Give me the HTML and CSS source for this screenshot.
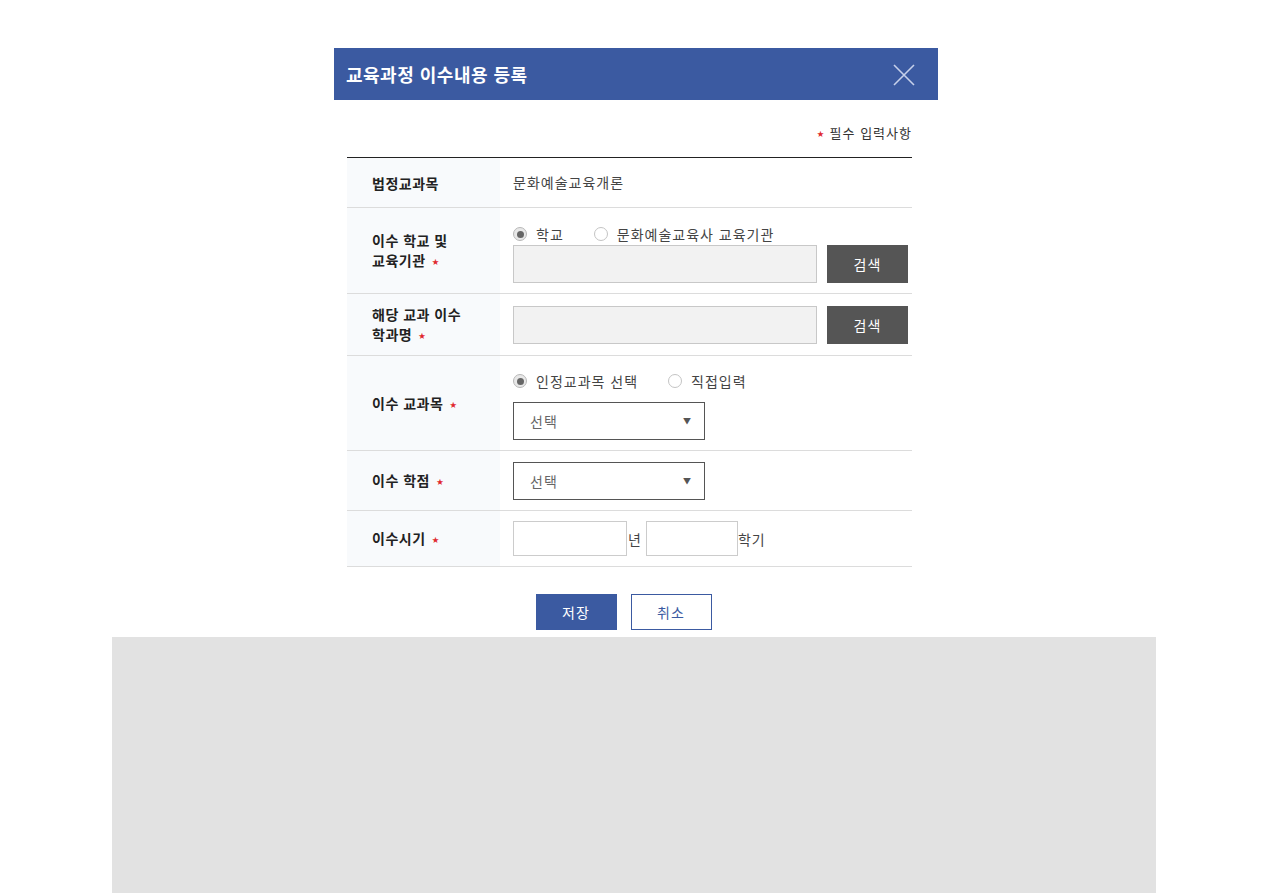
FILE: index.html
```html
<!DOCTYPE html>
<html lang="ko">
<head>
    <meta charset="UTF-8">
    <meta name="viewport" content="width=device-width, initial-scale=1.0">
    <title>교육과정 이수내용 등록</title>
    <link rel="stylesheet" href="styles.css">
</head>
<body>
    <div class="page">
        <div class="modal">
            <div class="modal-header">
                <h1>교육과정 이수내용 등록</h1>
                <button type="button" class="close-btn" aria-label="닫기">
                    <svg width="22" height="22" viewBox="0 0 22 22">
                        <path d="M1 1 L21 21 M21 1 L1 21" stroke="#c6d0ea" stroke-width="1.6" fill="none"/>
                    </svg>
                </button>
            </div>

            <div class="modal-body">
                <p class="required-note"><span class="req">★</span> 필수 입력사항</p>

                <table class="form-table">
                    <tr class="row-subject">
                        <th>법정교과목</th>
                        <td class="value">문화예술교육개론</td>
                    </tr>
                    <tr class="row-school">
                        <th>이수 학교 및<br>교육기관 <span class="req">★</span></th>
                        <td>
                            <div class="radio-group">
                                <label class="radio checked"><span class="dot"></span>학교</label>
                                <label class="radio"><span class="dot"></span>문화예술교육사 교육기관</label>
                            </div>
                            <div class="search-line">
                                <input type="text" class="text-input">
                                <button type="button" class="search-btn">검색</button>
                            </div>
                        </td>
                    </tr>
                    <tr class="row-dept">
                        <th>해당 교과 이수<br>학과명 <span class="req">★</span></th>
                        <td>
                            <div class="search-line">
                                <input type="text" class="text-input">
                                <button type="button" class="search-btn">검색</button>
                            </div>
                        </td>
                    </tr>
                    <tr class="row-course">
                        <th>이수 교과목 <span class="req">★</span></th>
                        <td>
                            <div class="radio-group">
                                <label class="radio checked"><span class="dot"></span>인정교과목 선택</label>
                                <label class="radio"><span class="dot"></span>직접입력</label>
                            </div>
                            <div class="select-box">선택<span class="arrow">▼</span></div>
                        </td>
                    </tr>
                    <tr class="row-credit">
                        <th>이수 학점 <span class="req">★</span></th>
                        <td>
                            <div class="select-box">선택<span class="arrow">▼</span></div>
                        </td>
                    </tr>
                    <tr class="row-period">
                        <th>이수시기 <span class="req">★</span></th>
                        <td>
                            <div class="period-line">
                                <input type="text" class="year-input">
                                <span class="unit">년</span>
                                <input type="text" class="term-input">
                                <span>학기</span>
                            </div>
                        </td>
                    </tr>
                </table>

                <div class="actions">
                    <button type="button" class="btn btn-save">저장</button>
                    <button type="button" class="btn btn-cancel">취소</button>
                </div>
            </div>
        </div>

        <div class="gray-area"></div>
    </div>
</body>
</html>
```

FILE: styles.css
```css
/* Base */
* {
    margin: 0;
    padding: 0;
    box-sizing: border-box;
}

body {
    font-family: "Noto Sans CJK KR", "Noto Sans", sans-serif;
    background: #fff;
    color: #333;
    font-size: 14px;
}

.page {
    width: 1044px;
    margin-left: 112px;
}

/* Modal */
.modal {
    width: 604px;
    margin: 48px 0 0 222px;
}

.modal-header {
    height: 52px;
    background: #3b5aa1;
    display: flex;
    align-items: center;
    justify-content: space-between;
    padding: 0 23px 0 12px;
}

.modal-header h1 {
    font-size: 18px;
    font-weight: 700;
    color: #fff;
    line-height: 24px;
    letter-spacing: 0.5px;
}

.close-btn {
    background: none;
    border: none;
    width: 22px;
    height: 22px;
    display: flex;
    margin-top: 1px;
}

.modal-body {
    padding: 23px 26px 0 13px;
}

.required-note {
    text-align: right;
    font-size: 13px;
    line-height: 20px;
    color: #333;
    letter-spacing: 1px;
    margin-bottom: 14px;
}

.req {
    color: #e0282e;
    font-size: 7px;
    vertical-align: 2px;
    margin-left: 2px;
    letter-spacing: 0;
}

.required-note .req {
    margin-right: 1px;
}

/* Form table */
.form-table {
    width: 100%;
    border-collapse: collapse;
    border-top: 1px solid #222;
}

.form-table tr {
    border-bottom: 1px solid #dcdcdc;
}

.form-table th {
    width: 153px;
    background: #f8fafc;
    text-align: left;
    vertical-align: middle;
    padding-left: 25px;
    font-size: 14px;
    font-weight: 700;
    color: #222;
    line-height: 20px;
    letter-spacing: 0.5px;
}

.form-table td {
    padding-left: 13px;
    vertical-align: top;
    color: #444;
    letter-spacing: 1px;
}

.row-subject td {
    padding-top: 14px;
    padding-bottom: 14px;
    line-height: 21px;
}

.row-school td {
    padding-top: 16px;
    padding-bottom: 10px;
}

.row-dept td {
    padding-top: 12px;
    padding-bottom: 11px;
}

.row-course td {
    padding-top: 15px;
    padding-bottom: 10px;
}

.row-credit td {
    padding-top: 11px;
    padding-bottom: 10px;
}

.row-period td {
    padding-top: 10px;
    padding-bottom: 10px;
}

/* Radios */
.radio-group {
    display: flex;
    gap: 30px;
    height: 20px;
    align-items: center;
    margin-bottom: 1px;
}

.radio {
    display: flex;
    align-items: center;
    gap: 9px;
    font-size: 14px;
    line-height: 20px;
    color: #444;
}

.radio .dot {
    width: 14px;
    height: 14px;
    border: 1px solid #c4c4c4;
    border-radius: 50%;
    background: #fff;
    display: flex;
    align-items: center;
    justify-content: center;
}

.radio.checked .dot {
    background: #e8e8e8;
    border-color: #b8b8b8;
}

.radio.checked .dot::after {
    content: "";
    width: 7px;
    height: 7px;
    border-radius: 50%;
    background: #666;
}

/* Inputs */
.search-line {
    display: flex;
    gap: 10px;
}

.text-input {
    width: 304px;
    height: 38px;
    border: 1px solid #c8c8c8;
    background: #f2f2f2;
    outline: none;
}

.search-btn {
    width: 81px;
    height: 38px;
    border: none;
    background: #555;
    color: #fff;
    font-family: inherit;
    font-size: 14px;
    letter-spacing: 1px;
}

.select-box {
    position: relative;
    width: 192px;
    height: 38px;
    border: 1px solid #555;
    background: #fff;
    padding-left: 16px;
    line-height: 36px;
    font-size: 14px;
    color: #666;
}

.row-course .select-box {
    margin-top: 11px;
}

.select-box .arrow {
    position: absolute;
    right: 12px;
    top: 0;
    font-size: 8px;
    color: #555;
}

.period-line {
    display: flex;
    align-items: center;
    font-size: 14px;
    color: #444;
}

.year-input,
.term-input {
    height: 35px;
    border: 1px solid #ccc;
    background: #fff;
    outline: none;
}

.year-input {
    width: 114px;
}

.term-input {
    width: 92px;
}

.unit {
    margin: 0 4px 0 1px;
}

/* Buttons */
.actions {
    display: flex;
    justify-content: center;
    gap: 14px;
    margin-top: 27px;
    padding-right: 12px;
}

.btn {
    width: 81px;
    height: 36px;
    font-family: inherit;
    font-size: 14px;
    letter-spacing: 1px;
}

.btn-save {
    background: #3b5aa1;
    border: none;
    color: #fff;
}

.btn-cancel {
    background: #fff;
    border: 1px solid #3b5aa1;
    color: #3b5aa1;
}

/* Lower backdrop area */
.gray-area {
    height: 260px;
    margin-top: 7px;
    background: #e2e2e2;
}
```
